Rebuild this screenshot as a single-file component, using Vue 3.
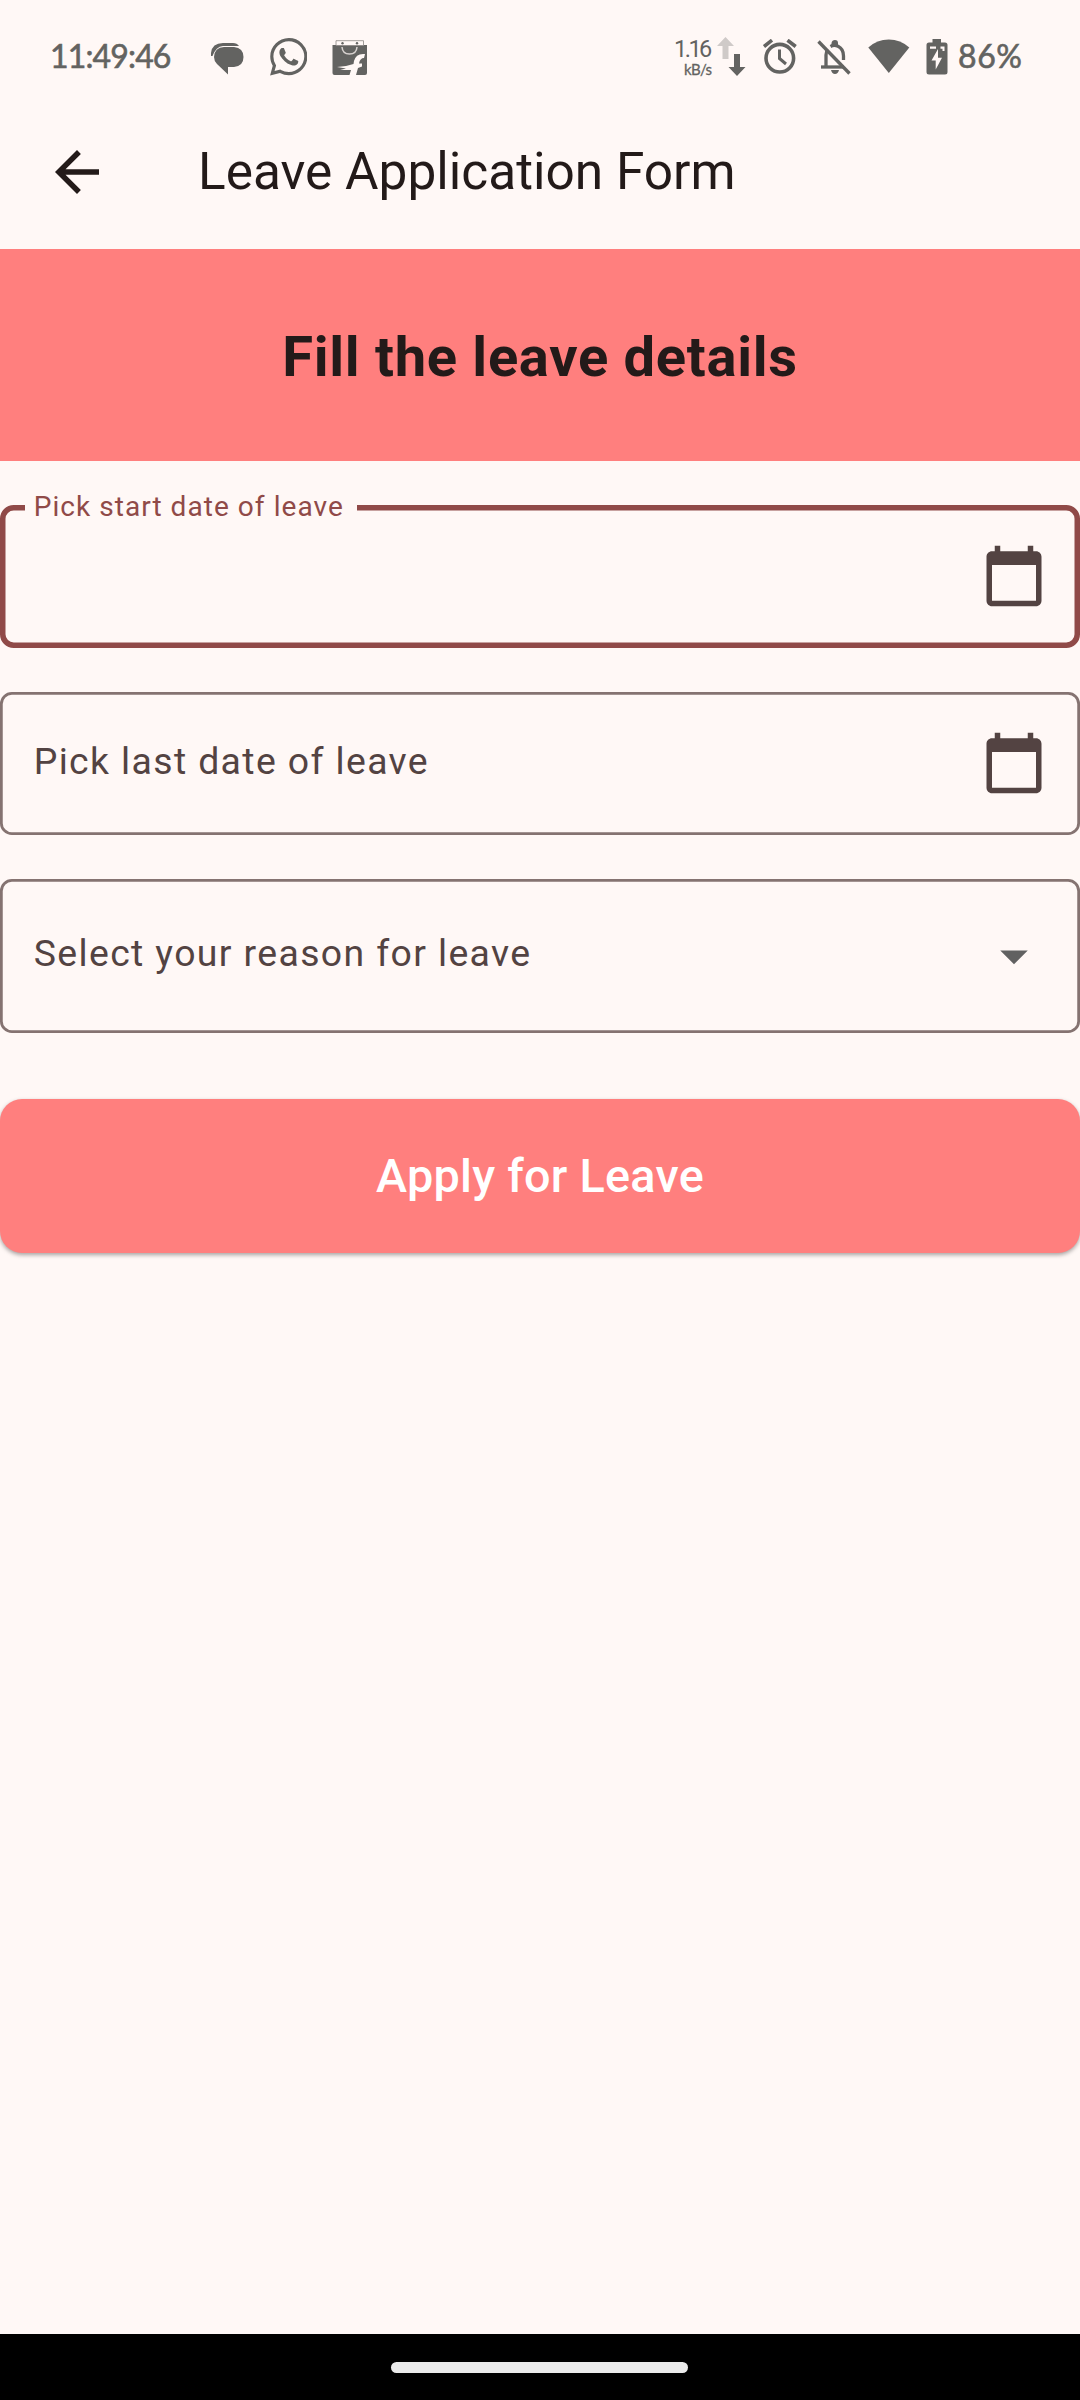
<script setup>
const dateIcon =
  'M20 3h-1V1h-2v2H7V1H5v2H4c-1.1 0-2 .9-2 2v16c0 1.1.9 2 2 2h16c1.1 0 2-.9 2-2V5c0-1.1-.9-2-2-2zm0 18H4V8h16v13z'
</script>

<template>
  <div class="screen">
    <header class="status">
      <span class="clock">11:49:46</span>
      <svg class="msg" width="33" height="32" viewBox="0 0 33 32">
        <path d="M0 13V10Q1 0 12 0H22Q26 0 28 3H12Q5 3.500 1.500 13Z" fill="#636361" />
        <path d="M13 4H23Q32.500 5 32.500 14Q32.500 23 23 24H17V31.500L6 21Q3 18 3 14Q3.500 4.500 13 4Z" fill="#636361" />
      </svg>
      <svg class="wa" width="37.500" height="37.500" viewBox="0 0 24 24">
        <path fill="#636361" d="M17.472 14.382c-.297-.149-1.758-.867-2.030-.967-.273-.099-.471-.148-.670.150-.197.297-.767.966-.940 1.164-.173.199-.347.223-.644.075-.297-.150-1.255-.463-2.390-1.475-.883-.788-1.480-1.761-1.653-2.059-.173-.297-.018-.458.130-.606.134-.133.298-.347.446-.520.149-.174.198-.298.298-.497.099-.198.050-.371-.025-.520-.075-.149-.669-1.612-.916-2.207-.242-.579-.487-.500-.669-.510-.173-.008-.371-.010-.570-.010-.198 0-.520.074-.792.372-.272.297-1.040 1.016-1.040 2.479 0 1.462 1.065 2.875 1.213 3.074.149.198 2.096 3.200 5.077 4.487.709.306 1.262.489 1.694.625.712.227 1.360.195 1.871.118.571-.085 1.758-.719 2.006-1.413.248-.694.248-1.289.173-1.413-.074-.124-.272-.198-.570-.347m-5.421 7.403h-.004a9.870 9.870 0 01-5.031-1.378l-.361-.214-3.741.982.998-3.648-.235-.374a9.860 9.860 0 01-1.510-5.260c.001-5.450 4.436-9.884 9.888-9.884 2.640 0 5.122 1.030 6.988 2.898a9.825 9.825 0 012.893 6.994c-.003 5.450-4.437 9.884-9.885 9.884m8.413-18.297A11.815 11.815 0 0012.050 0C5.495 0 .160 5.335.157 11.892c0 2.096.547 4.142 1.588 5.945L.057 24l6.305-1.654a11.882 11.882 0 005.683 1.448h.005c6.554 0 11.890-5.335 11.893-11.893a11.821 11.821 0 00-3.480-8.413z" />
      </svg>
      <svg class="bag" width="36" height="36" viewBox="0 0 36 36">
        <path d="M0.500 5H35V33Q35 35 33 35H2.500Q0.500 35 0.500 33Z" fill="#636361" />
        <path d="M4 0.700H31.500V5.500H4Z" fill="#fff8f6" stroke="#8a8583" stroke-width="0.800" />
        <circle cx="10.500" cy="3.200" r="1.200" fill="#636361" />
        <circle cx="25" cy="3.200" r="1.200" fill="#636361" />
        <path d="M10 7Q10.500 14 17.500 14Q24.500 14 25 7" fill="none" stroke="#d8d2d0" stroke-width="1.500" />
        <path d="M33 14Q24 13 22 21L21.500 24L14 26L5 27L14 28.500L8 30L19 30L17.500 35H24L26 28L30 26.500V23.500H27Q28 18 32 18Z" fill="#fff8f6" />
      </svg>
      <span class="fill" />
      <span class="rate"><b>1.16</b><i>kB/s</i></span>
      <svg class="traffic" width="29" height="40" viewBox="0 0 29 40">
        <path d="M8.500 0L17 9H11.500V22H5.500V9H0Z" fill="#cfcac8" />
        <path d="M17 17H23V30H28.500L20 39L11.500 30H17Z" fill="#636361" />
      </svg>
      <svg class="alarm" width="34" height="35" viewBox="0 0 34 35">
        <g fill="none" stroke="#636361" stroke-width="3.600">
          <circle cx="16.800" cy="19.200" r="13.800" />
          <path d="M1 7.500L9 1.200M24.500 1.200L32.700 7.500" />
          <path d="M16.500 10.500V19.500L23 25" stroke-width="3" />
        </g>
      </svg>
      <svg class="bell" width="34" height="36" viewBox="0 0 34 36">
        <g fill="none" stroke="#636361" stroke-width="3.300">
          <path d="M1.500 1.500L32.500 33.500" />
          <path d="M4 27H27" />
          <path d="M9 28V15Q9 11.500 10.800 9.500" />
          <path d="M13.500 6.500Q17 4.500 21 6.300Q26.500 9 26.500 16V20" />
        </g>
        <path d="M14.500 5V3Q15 0 18 0Q21 0 21 3V5ZM14 30H22Q21 34 18 34Q15 34 14 30Z" fill="#636361" />
      </svg>
      <svg class="wifi" width="42" height="35" viewBox="0 0 42 35">
        <path d="M0.300 8.500Q9 0.500 20.800 0.500Q32.500 0.500 41.300 8.500L20.800 34Z" fill="#636361" />
      </svg>
      <svg class="battery" width="22" height="36" viewBox="0 0 22 36">
        <path d="M6.500 0H15V3.500H19Q21.500 3.500 21.500 6V33Q21.500 35.500 19 35.500H3Q0.500 35.500 0.500 33V6Q0.500 3.500 3 3.500H6.500Z" fill="#636361" />
        <path d="M12 10L5.500 21.500H9.700V30.500L16 18.800H12ZM4 7.500H10V9.800H4ZM14.500 7.500H18.500V12H16.500V9.800H14.500Z" fill="#fff8f6" />
      </svg>
      <span class="pct">86%</span>
    </header>

    <nav class="appbar">
      <svg width="66" height="66" viewBox="0 0 24 24">
        <path fill="#231a19" d="M20 11H7.830l5.590-5.590L12 4l-8 8 8 8 1.410-1.410L7.830 13H20v-2z" />
      </svg>
      <h1>Leave Application Form</h1>
    </nav>

    <section class="banner"><h2>Fill the leave details</h2></section>

    <main class="form">
      <div class="field">
        <svg class="outline" width="1080" height="143" viewBox="0 0 1080 143">
          <path d="M25 2.750H13.750A11 11 0 0 0 2.750 13.750V129.250A11 11 0 0 0 13.750 140.250H1066.250A11 11 0 0 0 1077.250 129.250V13.750A11 11 0 0 0 1066.250 2.750H357" fill="none" stroke="#904a48" stroke-width="5.500" />
        </svg>
        <label class="floating">Pick start date of leave</label>
        <svg class="icon" width="66" height="66" viewBox="0 0 24 24"><path fill="#534342" :d="dateIcon" /></svg>
      </div>
      <div class="field">
        <svg class="outline" width="1080" height="143" viewBox="0 0 1080 143">
          <rect x="1.375" y="1.375" width="1077.250" height="140.250" rx="10.500" fill="none" stroke="#857371" stroke-width="2.750" />
        </svg>
        <label class="last">Pick last date of leave</label>
        <svg class="icon" width="66" height="66" viewBox="0 0 24 24"><path fill="#534342" :d="dateIcon" /></svg>
      </div>
      <div class="field select">
        <svg class="outline" width="1080" height="154" viewBox="0 0 1080 154">
          <rect x="1.375" y="1.375" width="1077.250" height="151.250" rx="10.500" fill="none" stroke="#857371" stroke-width="2.750" />
        </svg>
        <label class="reason">Select your reason for leave</label>
        <svg class="icon" width="66" height="66" viewBox="0 0 24 24"><path fill="#616161" d="M7 10l5 5 5-5z" /></svg>
      </div>
      <button class="apply">Apply for Leave</button>
    </main>

    <footer class="navbar"><div class="handle" /></footer>
  </div>
</template>

<style>
body {
  margin: 0;
  background: #fff8f6;
}
</style>

<style scoped>
.screen {
  width: 1080px;
  height: 2400px;
  display: flex;
  flex-direction: column;
  background: #fff8f6;
  font-family: Roboto, sans-serif;
  color: #231a19;
  overflow: hidden;
}
svg {
  display: block;
  flex: none;
}
.status {
  height: 112px;
  flex: none;
  display: flex;
  align-items: flex-start;
  color: #636361;
  font-family: Lato, sans-serif;
  box-sizing: border-box;
  padding-left: 50px;
  white-space: nowrap;
}
.clock {
  width: 161px;
  margin-top: 36px;
  font-size: 32px;
  line-height: 40px;
  font-weight: 400;
  letter-spacing: -0.850px;
  -webkit-text-stroke: 0.600px #636361;
}
.msg { margin-top: 43px; }
.wa { margin: 38px 0 0 25.500px; }
.bag { margin: 40px 0 0 25px; }
.fill { flex: 1; }
.rate {
  display: flex;
  flex-direction: column;
  align-items: flex-start;
  width: 40px;
  margin-top: 37px;
}
.rate b {
  margin-left: 3px;
  font-family: Roboto, sans-serif;
  font-weight: 400;
  font-size: 23.500px;
  line-height: 25px;
  letter-spacing: -2.500px;
  word-spacing: 0;
}
.rate i {
  margin-left: 13px;
  font-style: normal;
  font-size: 15px;
  line-height: 15px;
  letter-spacing: -0.700px;
  -webkit-text-stroke: 0.300px #636361;
}
.traffic { margin: 37px 0 0 6px; }
.alarm { margin: 39px 0 0 17px; }
.bell { margin: 40px 0 0 20px; }
.wifi { margin: 39px 0 0 17px; }
.battery { margin: 39px 0 0 16px; }
.pct {
  width: 122px;
  margin: 36px 0 0 10px;
  font-size: 32px;
  line-height: 40px;
  letter-spacing: 0.600px;
  -webkit-text-stroke: 0.600px #636361;
}
.appbar {
  height: 137px;
  flex: none;
  display: flex;
  align-items: flex-start;
  padding-left: 44px;
}
.appbar svg { margin-top: 27px; }
h1 {
  margin: 30px 0 0 88px;
  font-size: 51.400px;
  line-height: 60px;
  font-weight: 400;
}
.banner {
  height: 211.500px;
  flex: none;
  background: #ff7f7e;
  display: flex;
  justify-content: center;
}
h2 {
  margin: 78px 0 0;
  font-size: 56.100px;
  line-height: 60px;
  font-weight: 700;
  letter-spacing: 0.6875px;
}
.form {
  flex: 1;
  display: flex;
  flex-direction: column;
  padding-top: 44px;
}
.field {
  position: relative;
  height: 143px;
  flex: none;
  margin-bottom: 44px;
  display: flex;
  align-items: center;
  justify-content: space-between;
  padding: 0 33px;
}
.outline {
  position: absolute;
  left: 0;
  top: 0;
}
label {
  margin-left: 0.700px;
  color: #534342;
  font-size: 37.400px;
  line-height: 44px;
  letter-spacing: 1.375px;
}
.last { margin-bottom: 4px; }
.floating {
  align-self: flex-start;
  margin-top: -20px;
  color: #904a48;
  font-size: 28.050px;
  letter-spacing: 1.030px;
}
.select {
  height: 154px;
  margin-bottom: 66.200px;
}
.reason { margin-bottom: 6px; }
.apply {
  height: 154px;
  border: 0;
  padding: 0;
  border-radius: 22px;
  background: #ff7f7e;
  color: #fff;
  font-family: Roboto, sans-serif;
  font-weight: 500;
  font-size: 46.750px;
  letter-spacing: 0.275px;
  box-shadow: 0 2px 4px rgba(0, 0, 0, 0.350);
}
.navbar {
  height: 66px;
  flex: none;
  background: #000;
  display: flex;
  justify-content: center;
  align-items: center;
}
.handle {
  width: 297px;
  height: 11px;
  margin-right: 1px;
  border-radius: 6px;
  background: #ebebeb;
}
</style>
